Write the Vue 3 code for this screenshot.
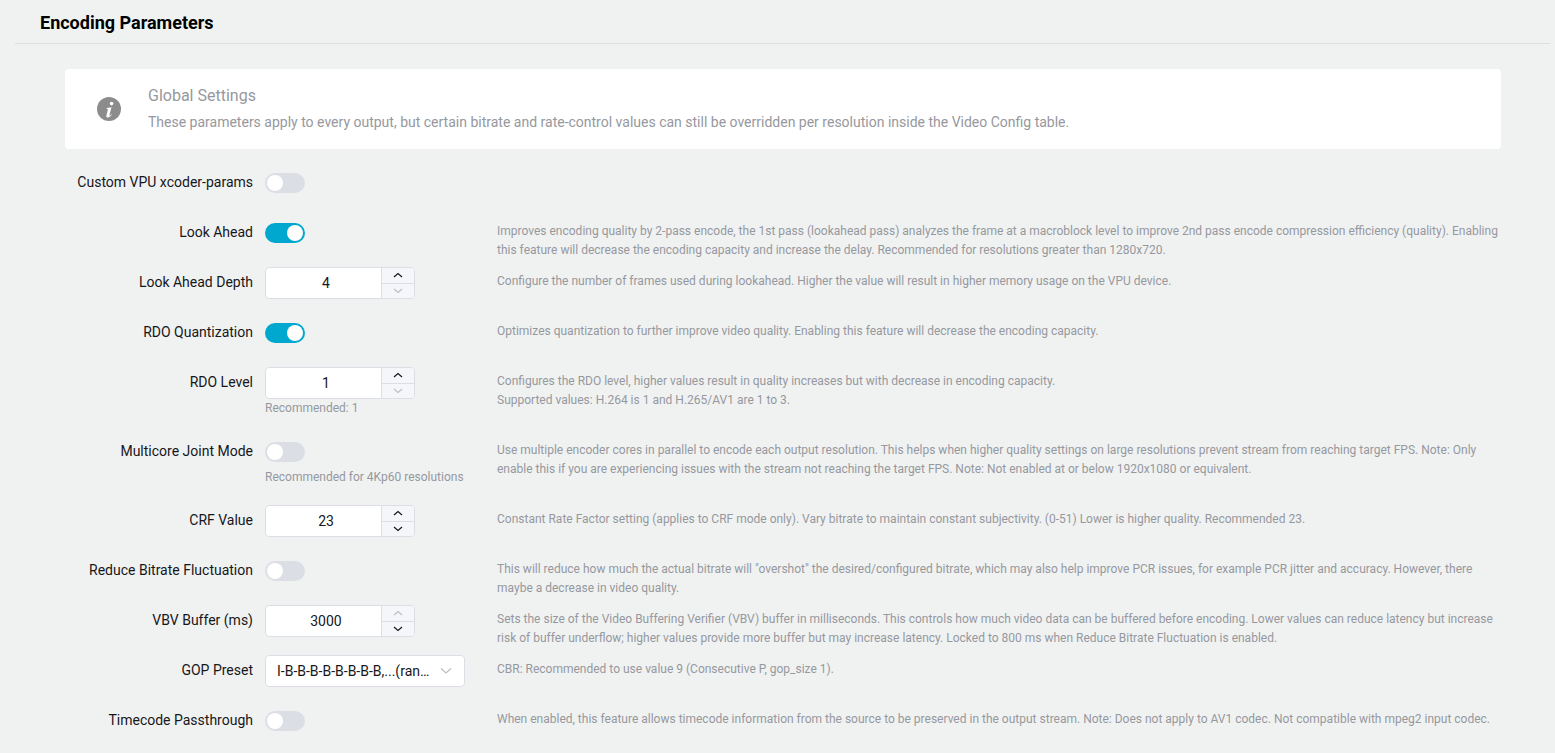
<script setup>
const rows = [
  { label: 'Custom VPU xcoder-params', type: 'switch', on: false },
  {
    label: 'Look Ahead',
    type: 'switch',
    on: true,
    desc: ['Improves encoding quality by 2-pass encode, the 1st pass (lookahead pass) analyzes the frame at a macroblock level to improve 2nd pass encode compression efficiency (quality). Enabling this feature will decrease the encoding capacity and increase the delay. Recommended for resolutions greater than 1280x720.']
  },
  {
    label: 'Look Ahead Depth',
    type: 'number',
    value: '4',
    downOff: true,
    desc: ['Configure the number of frames used during lookahead. Higher the value will result in higher memory usage on the VPU device.']
  },
  {
    label: 'RDO Quantization',
    type: 'switch',
    on: true,
    desc: ['Optimizes quantization to further improve video quality. Enabling this feature will decrease the encoding capacity.']
  },
  {
    label: 'RDO Level',
    type: 'number',
    value: '1',
    downOff: true,
    help: 'Recommended: 1',
    desc: ['Configures the RDO level, higher values result in quality increases but with decrease in encoding capacity.', 'Supported values: H.264 is 1 and H.265/AV1 are 1 to 3.']
  },
  {
    label: 'Multicore Joint Mode',
    type: 'switch',
    on: false,
    help: 'Recommended for 4Kp60 resolutions',
    desc: ['Use multiple encoder cores in parallel to encode each output resolution. This helps when higher quality settings on large resolutions prevent stream from reaching target FPS. Note: Only enable this if you are experiencing issues with the stream not reaching the target FPS. Note: Not enabled at or below 1920x1080 or equivalent.']
  },
  {
    label: 'CRF Value',
    type: 'number',
    value: '23',
    desc: ['Constant Rate Factor setting (applies to CRF mode only). Vary bitrate to maintain constant subjectivity. (0-51) Lower is higher quality. Recommended 23.']
  },
  {
    label: 'Reduce Bitrate Fluctuation',
    type: 'switch',
    on: false,
    desc: ['This will reduce how much the actual bitrate will "overshot" the desired/configured bitrate, which may also help improve PCR issues, for example PCR jitter and accuracy. However, there maybe a decrease in video quality.']
  },
  {
    label: 'VBV Buffer (ms)',
    type: 'number',
    value: '3000',
    upOff: true,
    desc: ['Sets the size of the Video Buffering Verifier (VBV) buffer in milliseconds. This controls how much video data can be buffered before encoding. Lower values can reduce latency but increase risk of buffer underflow; higher values provide more buffer but may increase latency. Locked to 800 ms when Reduce Bitrate Fluctuation is enabled.']
  },
  {
    label: 'GOP Preset',
    type: 'select',
    value: 'I-B-B-B-B-B-B-B-B,...(random access)',
    desc: ['CBR: Recommended to use value 9 (Consecutive P, gop_size 1).']
  },
  {
    label: 'Timecode Passthrough',
    type: 'switch',
    on: false,
    desc: ['When enabled, this feature allows timecode information from the source to be preserved in the output stream. Note: Does not apply to AV1 codec. Not compatible with mpeg2 input codec.']
  }
]
</script>

<template>
  <div class="page">
    <div class="section-head">
      <h2 class="section-title">Encoding Parameters</h2>
    </div>

    <div class="body">
      <div class="notice">
        <svg class="notice-icon" viewBox="0 0 24 24" width="24" height="24">
          <circle cx="12" cy="12" r="12" fill="#8c8c8c" />
          <circle cx="14.6" cy="6.600" r="1.800" fill="#fff" />
          <path fill="#fff" d="M9.7 11l4.800-.8-2.100 8c-.1.500.3.600.7.300.4-.3.900-.8 1.300-1.300l.5.400c-1.100 1.600-2.600 3-4.200 3-1.200 0-1.600-.9-1.300-2l1.400-5.500c.2-.8-.1-1-.9-1.100z" />
        </svg>
        <div>
          <div class="notice-title">Global Settings</div>
          <div class="notice-text">These parameters apply to every output, but certain bitrate and rate-control values can still be overridden per resolution inside the Video Config table.</div>
        </div>
      </div>

      <div class="form">
        <div v-for="row in rows" :key="row.label" class="form-row">
          <label class="form-label">{{ row.label }}</label>
          <div class="form-control">
            <div class="control-line">
              <span v-if="row.type === 'switch'" class="switch" :class="{ on: row.on }"></span>

              <div v-else-if="row.type === 'number'" class="number-input">
                <span class="number-value">{{ row.value }}</span>
                <div class="steppers">
                  <span class="step" :class="{ off: row.upOff }">
                    <svg viewBox="0 0 12 8" width="12" height="8"><path d="M2 6l4-3.500L10 6" /></svg>
                  </span>
                  <span class="step" :class="{ off: row.downOff }">
                    <svg viewBox="0 0 12 8" width="12" height="8"><path d="M2 2l4 3.500L10 2" /></svg>
                  </span>
                </div>
              </div>

              <div v-else class="select">
                <span class="select-value">{{ row.value }}</span>
                <svg class="select-arrow" viewBox="0 0 14 8" width="14" height="8"><path d="M2 1.500l5 4.500 5-4.500" /></svg>
              </div>
            </div>
            <div v-if="row.help" class="form-help">{{ row.help }}</div>
          </div>
          <div v-if="row.desc" class="form-desc">
            <div v-for="line in row.desc" :key="line">{{ line }}</div>
          </div>
        </div>
      </div>
    </div>
  </div>
</template>

<style>
html,
body {
  margin: 0;
  background: #f0f2f2;
}
</style>

<style scoped>
.page {
  height: 753px;
  overflow: hidden;
  box-sizing: border-box;
  padding-left: 15px;
  padding-right: 5px;
  font-family: Roboto, "Liberation Sans", sans-serif;
  background: #f0f2f2;
  color: #17171a;
}

.section-head {
  height: 43px;
  box-sizing: content-box;
  border-bottom: 1px solid #dcdee2;
  padding-left: 25px;
}

.section-title {
  margin: 0;
  font-size: 18px;
  line-height: 46px;
  font-weight: 700;
  color: #000;
}

.body {
  padding: 25px 49px 0 50px;
}

.notice {
  display: flex;
  align-items: center;
  gap: 27px;
  height: 80px;
  padding-left: 32px;
  box-sizing: border-box;
  background: #fff;
  border-radius: 4px;
}

.notice-icon {
  flex: none;
}

.notice-title {
  font-size: 16px;
  line-height: 24px;
  color: #96989e;
  margin-bottom: 2px;
}

.notice-text {
  font-size: 14px;
  line-height: 24px;
  color: #96989e;
}

.form {
  padding-top: 18px;
}

.form-row {
  display: flex;
  align-items: flex-start;
  margin-bottom: 18px;
}

.form-label {
  flex: none;
  width: 188px;
  padding-right: 12px;
  text-align: right;
  font-size: 14px;
  line-height: 30px;
}

.form-control {
  flex: none;
  width: 200px;
}

.control-line {
  height: 32px;
  display: flex;
  align-items: center;
}

.form-help {
  font-size: 12px;
  line-height: 19px;
  color: #96989e;
  white-space: nowrap;
}

.form-desc {
  flex: 1;
  height: 32px;
  margin-left: 32px;
  margin-top: 5px;
  margin-bottom: -5px;
  font-size: 12px;
  line-height: 19px;
  color: #96989e;
}

.switch {
  position: relative;
  display: block;
  width: 40px;
  height: 20px;
  border-radius: 10px;
  background: #dcdee6;
}

.switch::after {
  content: "";
  position: absolute;
  top: 2px;
  left: 2px;
  width: 16px;
  height: 16px;
  border-radius: 50%;
  background: #fff;
}

.switch.on {
  background: #00a8cf;
}

.switch.on::after {
  left: 22px;
}

.number-input {
  display: flex;
  width: 150px;
  height: 32px;
  box-sizing: border-box;
  border: 1px solid #dcdee6;
  border-radius: 4px;
  background: #fff;
  overflow: hidden;
}

.number-value {
  flex: 1;
  padding-left: 5px;
  text-align: center;
  font-size: 14px;
  line-height: 31px;
  color: #17171a;
}

.steppers {
  flex: none;
  width: 32px;
  display: flex;
  flex-direction: column;
  border-left: 1px solid #dcdee6;
  background: #f5f6fa;
}

.step {
  flex: 1;
  display: flex;
  align-items: center;
  justify-content: center;
}

.step + .step {
  border-top: 1px solid #dcdee6;
}

.step svg path {
  fill: none;
  stroke: #17171a;
  stroke-width: 1.2;
}

.step.off svg path {
  stroke: #bbbec4;
}

.select {
  display: flex;
  align-items: center;
  width: 200px;
  height: 32px;
  box-sizing: border-box;
  border: 1px solid #dcdee6;
  border-radius: 4px;
  background: #fff;
  padding: 0 11px;
}

.select-value {
  flex: 1;
  min-width: 0;
  font-size: 14px;
  white-space: nowrap;
  overflow: hidden;
  text-overflow: ellipsis;
  color: #17171a;
}

.select-arrow {
  flex: none;
  margin-left: 6px;
}

.select-arrow path {
  fill: none;
  stroke: #bbbec4;
  stroke-width: 1.2;
}
</style>
